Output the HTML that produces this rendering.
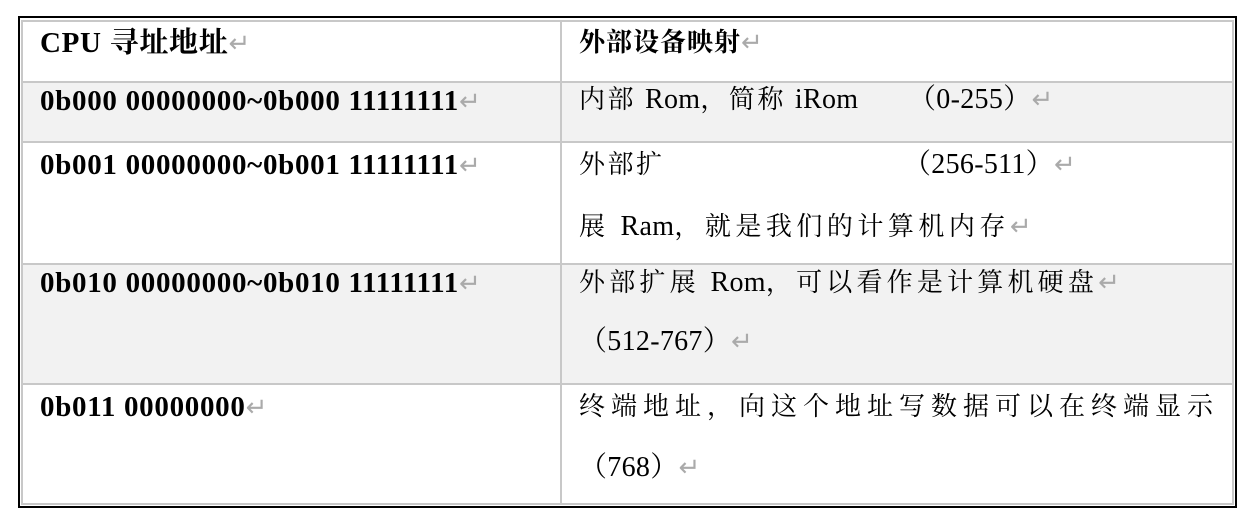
<!DOCTYPE html>
<html><head><meta charset="utf-8"><style>
html,body{margin:0;padding:0;background:#fff;width:1251px;height:520px;overflow:hidden}
.outer{position:absolute;left:18px;top:16px;width:1219px;height:492px;border:2px solid #000;box-sizing:border-box}
.g{position:absolute;background:#c8c8c8}
.bg{position:absolute;background:#f2f2f2;left:22px;width:1211px}
.t{position:absolute;white-space:nowrap;line-height:30px;color:#000}
.l{font-family:"Liberation Serif","Noto Serif CJK SC",serif;font-weight:bold;font-size:29px;letter-spacing:0.7px;left:40px}
.r{font-family:"Liberation Serif","Noto Serif CJK SC",serif;font-size:26px;left:579px;letter-spacing:2.5px}
.a{color:#aaa;font-size:26px;font-weight:normal;letter-spacing:0}
.e{letter-spacing:0.3px;font-size:28px}
</style></head><body>
<div class="bg" style="top:82px;height:60px"></div>
<div class="bg" style="top:264px;height:120px"></div>
<div class="outer"></div>
<div class="g" style="left:21px;top:20px;width:1213px;height:2px"></div>
<div class="g" style="left:21px;top:503px;width:1213px;height:2px"></div>
<div class="g" style="left:21px;top:20px;width:2px;height:485px"></div>
<div class="g" style="left:1232px;top:20px;width:2px;height:485px"></div>
<div class="g" style="left:560px;top:20px;width:2px;height:485px"></div>
<div class="g" style="left:21px;top:81px;width:1213px;height:2px"></div>
<div class="g" style="left:21px;top:141px;width:1213px;height:2px"></div>
<div class="g" style="left:21px;top:263px;width:1213px;height:2px"></div>
<div class="g" style="left:21px;top:383px;width:1213px;height:2px"></div>

<div class="t l" style="top:28px">CPU 寻址地址<span class="a">↵</span></div>
<div class="t l" style="top:86px">0b000 00000000~0b000 11111111<span class="a">↵</span></div>
<div class="t l" style="top:150px">0b001 00000000~0b001 11111111<span class="a">↵</span></div>
<div class="t l" style="top:268px">0b010 00000000~0b010 11111111<span class="a">↵</span></div>
<div class="t l" style="top:392px">0b011 00000000<span class="a">↵</span></div>

<div class="t r" style="top:28px;font-weight:bold;letter-spacing:1px">外部设备映射<span class="a">↵</span></div>
<div class="t r" style="top:85px">内部 <span class="e">Rom</span>，简称 <span class="e">iRom</span></div>
<div class="t r" style="top:85px;left:908px"><span class="e">（0-255）</span><span class="a">↵</span></div>
<div class="t r" style="top:150px">外部扩</div>
<div class="t r" style="top:150px;left:903px"><span class="e">（256-511）</span><span class="a">↵</span></div>
<div class="t r" style="top:212px;letter-spacing:4.5px">展 <span class="e">Ram</span>，就是我们的计算机内存<span class="a">↵</span></div>
<div class="t r" style="top:268px;letter-spacing:4.2px">外部扩展 <span class="e">Rom</span>，可以看作是计算机硬盘<span class="a">↵</span></div>
<div class="t r" style="top:327px"><span class="e">（512-767）</span><span class="a">↵</span></div>
<div class="t r" style="top:392px;letter-spacing:6px">终端地址，向这个地址写数据可以在终端显示</div>
<div class="t r" style="top:453px"><span class="e">（768）</span><span class="a">↵</span></div>
</body></html>
